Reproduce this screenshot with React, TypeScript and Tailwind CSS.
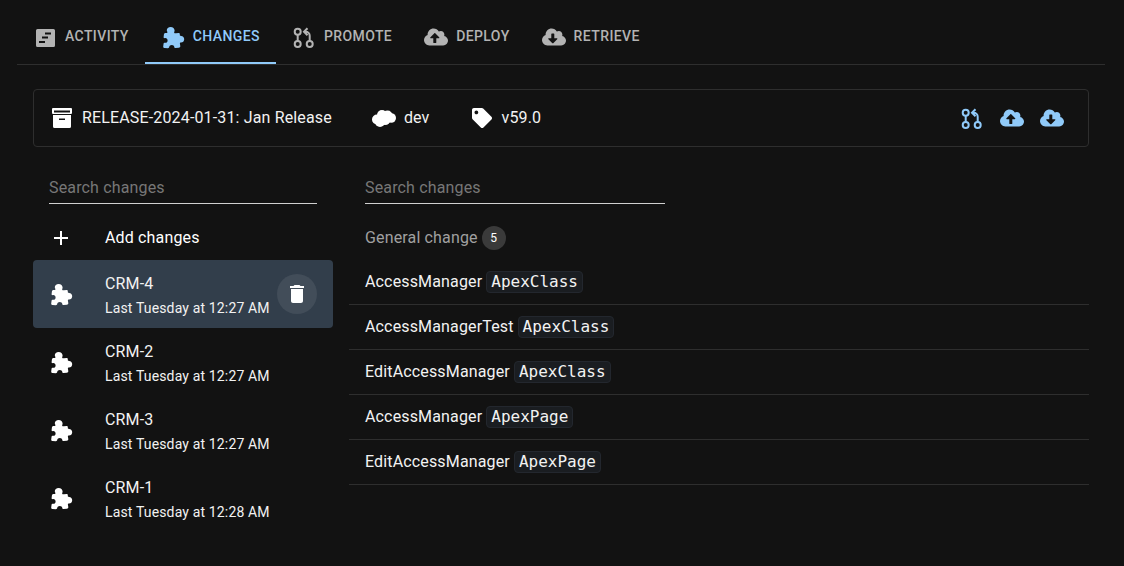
import React from "react";
import { FaCloudUploadAlt, FaCloudDownloadAlt, FaTag } from "react-icons/fa";

const ActivityIcon = () => (
  <svg viewBox="0 0 24 24" className="h-6 w-6" fill="currentColor">
    <path
      fillRule="evenodd"
      d="M4.5 4h16a1.5 1.5 0 0 1 1.5 1.5v15a1.5 1.5 0 0 1-1.5 1.5h-16A1.5 1.5 0 0 1 3 20.5v-15A1.5 1.5 0 0 1 4.5 4zM12 7.5v2h6v-2h-6zM9 11.5v2h6v-2H9zM6 16v2h6v-2H6z"
    />
  </svg>
);

const PuzzleIcon = () => (
  <svg viewBox="0 0 24 24" className="h-6 w-6 shrink-0" fill="currentColor">
    <path d="M9.6 2C12 2 13.6 3.6 13.6 5.5C13.6 6.5 13 7 13.2 7.7C13.4 8.3 14 8.3 15 8.2L17.6 7.9C18.4 7.9 18.8 8.3 18.8 9L18.8 10C18.8 10.8 19.4 10.9 20.1 10.9C22 10.9 23.2 12.3 23.2 14.2C23.2 16.2 21.8 17.5 20 17.5C19.2 17.5 18.8 17.7 18.9 18.5L19.3 21C19.4 22 18.8 22.7 17.8 22.8L14.6 23.1C13.7 23.2 13.4 22.7 13.3 22C13.2 20.8 12.2 20 10.8 20C9.4 20 8.3 20.9 8.2 22C8.1 22.7 7.7 23.2 6.9 23.2L3.6 23C2.6 22.9 2.1 22.3 2.2 21.4L2.6 18.6C2.7 17.9 3.2 17.6 3.9 17.8C5.4 18.1 6.6 17 6.6 15.4C6.6 13.9 5.3 12.8 3.9 13.1C3.1 13.3 2.6 13 2.6 12.2L2.9 9.6C3 8.6 3.6 8 4.5 8L5.5 8C6.3 8 6.6 7.4 6.3 6.7C6.1 6.2 5.8 5.9 5.8 5.2C5.8 3.4 7.4 2 9.6 2Z" />
  </svg>
);

const PromoteIcon = ({ className }: { className?: string }) => (
  <svg viewBox="0 0 24 24" className={className} fill="none" stroke="currentColor" strokeWidth="2">
    <circle cx="5.7" cy="6.7" r="3" />
    <circle cx="5.7" cy="19" r="3" />
    <circle cx="17.7" cy="19" r="3" />
    <path d="M5.7 9.7V16M17.7 16v-5.3a4 4 0 0 0-4-4H12.5M15.5 3.2 12 6.7l3.5 3.5" />
  </svg>
);

const ArchiveIcon = () => (
  <svg viewBox="0 0 20 20" className="mr-[10px] h-5 w-5 shrink-0 text-white" fill="currentColor">
    <path
      fillRule="evenodd"
      d="M1 0h18a1 1 0 0 1 1 1v4a1 1 0 0 1-1 1H1a1 1 0 0 1-1-1V1a1 1 0 0 1 1-1zM2 2.5v2h16v-2H2zM1 7h18v11.5a1.5 1.5 0 0 1-1.5 1.5h-15A1.5 1.5 0 0 1 1 18.5V7zM7 10.5V12h6v-1.5H7z"
    />
  </svg>
);

const SalesforceBlob = () => (
  <svg viewBox="0 0 24 17" className="ml-10 mr-2 h-[17px] w-6 shrink-0 text-white" fill="currentColor">
    <circle cx="5" cy="9.5" r="5" />
    <circle cx="10" cy="5" r="5" />
    <circle cx="15.5" cy="5.5" r="5" />
    <circle cx="19.2" cy="8" r="4.8" />
    <circle cx="13" cy="9.5" r="5.5" />
    <circle cx="8" cy="12" r="5" />
  </svg>
);

const AddIcon = () => (
  <svg viewBox="0 0 24 24" className="h-6 w-6 shrink-0" fill="currentColor">
    <path d="M19 13h-6v6h-2v-6H5v-2h6V5h2v6h6v2z" />
  </svg>
);

const DeleteIcon = () => (
  <svg viewBox="0 0 24 24" className="h-6 w-6" fill="currentColor">
    <path d="M6 19c0 1.1.9 2 2 2h8c1.1 0 2-.9 2-2V7H6v12zM19 4h-3.5l-1-1h-5l-1 1H5v2h14V4z" />
  </svg>
);

const tabs = [
  { label: "Activity", icon: <ActivityIcon /> },
  { label: "Changes", icon: <PuzzleIcon />, active: true },
  { label: "Promote", icon: <PromoteIcon className="h-6 w-6" /> },
  { label: "Deploy", icon: <FaCloudUploadAlt className="h-6 w-6" /> },
  { label: "Retrieve", icon: <FaCloudDownloadAlt className="h-6 w-6" /> },
];

const changeSets = [
  { name: "CRM-4", time: "Last Tuesday at 12:27 AM", selected: true },
  { name: "CRM-2", time: "Last Tuesday at 12:27 AM" },
  { name: "CRM-3", time: "Last Tuesday at 12:27 AM" },
  { name: "CRM-1", time: "Last Tuesday at 12:28 AM" },
];

const files = [
  { name: "AccessManager", type: "ApexClass" },
  { name: "AccessManagerTest", type: "ApexClass" },
  { name: "EditAccessManager", type: "ApexClass" },
  { name: "AccessManager", type: "ApexPage" },
  { name: "EditAccessManager", type: "ApexPage" },
];

const SearchField = ({ className }: { className: string }) => (
  <div className={`h-[33px] border-b border-[#d0d0d0] pt-[5px] text-[16px] leading-[24px] tracking-[0.15px] text-[#777777] ${className}`}>
    Search changes
  </div>
);

export default function App() {
  return (
    <div className="min-h-[566px] bg-[#121212] pl-[17px] pr-[19px] font-['Roboto',sans-serif] text-white">
      {/* Tabs */}
      <div className="flex h-[65px] border-b border-[#2e2e2e]">
        {tabs.map((tab) => (
          <div
            key={tab.label}
            className={`flex items-center gap-2 border-b-2 px-4 pt-[11px] text-[14px] font-medium uppercase tracking-[0.4px] ${
              tab.active ? "border-[#90caf9] text-[#90caf9]" : "border-transparent text-[#b3b3b3]"
            }`}
          >
            {tab.icon}
            {tab.label}
          </div>
        ))}
      </div>

      <div className="px-4 pt-6">
        {/* Release header */}
        <div className="flex h-[58px] items-center rounded border border-[#2e2e2e] pl-[18px] pr-6 text-[16px] tracking-[0.15px] text-[#f2f2f2]">
          <ArchiveIcon />
          <span>RELEASE-2024-01-31: Jan Release</span>
          <SalesforceBlob />
          <span>dev</span>
          <FaTag className="ml-[42px] mr-[10px] h-5 w-5 text-white" />
          <span>v59.0</span>
          <div className="ml-auto flex items-center gap-4 text-[#90caf9]">
            <PromoteIcon className="h-6 w-6" />
            <FaCloudUploadAlt className="h-6 w-6" />
            <FaCloudDownloadAlt className="h-6 w-6" />
          </div>
        </div>

        <div className="mt-6 flex gap-4">
          {/* Left column */}
          <div className="w-[300px]">
            <SearchField className="mx-4" />
            <div className="mb-px mt-[13px] flex h-[42px] items-center px-4 text-[16px] tracking-[0.15px]">
              <AddIcon />
              <span className="ml-8">Add changes</span>
            </div>
            {changeSets.map((item) => (
              <div
                key={item.name}
                className={`flex h-[68px] items-center rounded px-4 ${item.selected ? "bg-[#323e4b]" : ""}`}
              >
                <PuzzleIcon />
                <div className="ml-8 min-w-0 flex-1 pt-[2px]">
                  <div className="text-[16px] leading-[24px] tracking-[0.15px] text-[#f2f2f2]">{item.name}</div>
                  <div className="mt-[2px] text-[14px] leading-[20px] tracking-[0.15px] text-[#f2f2f2]">{item.time}</div>
                </div>
                {item.selected && (
                  <div className="flex h-10 w-10 shrink-0 items-center justify-center rounded-full bg-[#424d59]">
                    <DeleteIcon />
                  </div>
                )}
              </div>
            ))}
          </div>

          {/* Right column */}
          <div className="flex-1">
            <SearchField className="ml-4 w-[300px]" />
            <div className="mb-px mt-[13px] flex h-[42px] items-center gap-1 pl-4 text-[16px] tracking-[0.15px] text-[#a0a0a0]">
              General change
              <span className="flex h-6 w-6 items-center justify-center rounded-full bg-[#3a3a3a] text-[12px] text-white">5</span>
            </div>
            {files.map((file) => (
              <div
                key={file.name + file.type}
                className="flex h-[45px] items-center gap-1 border-b border-[#2e2e2e] pl-4 text-[16px] tracking-[0.15px] text-[#f2f2f2]"
              >
                {file.name}
                <code className="rounded border border-[#23272e] bg-[#1a1d21] px-1 font-['DejaVu_Sans_Mono',monospace] text-[16px] leading-[20px] tracking-normal">
                  {file.type}
                </code>
              </div>
            ))}
          </div>
        </div>
      </div>
    </div>
  );
}
